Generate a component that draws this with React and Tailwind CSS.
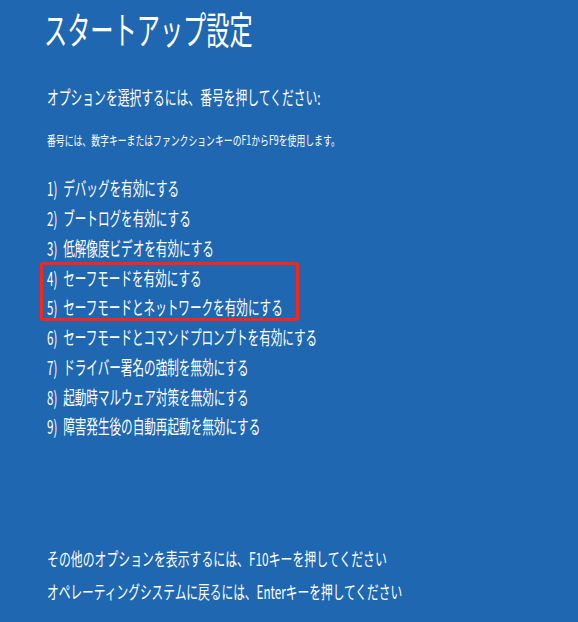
const items = [
  '1)\u2002デバッグを有効にする',
  '2)\u2002ブートログを有効にする',
  '3)\u2002低解像度ビデオを有効にする',
  '4)\u2002セーフモードを有効にする',
  '5)\u2002セーフモードとネットワークを有効にする',
  '6)\u2002セーフモードとコマンドプロンプトを有効にする',
  '7)\u2002ドライバー署名の強制を無効にする',
  '8)\u2002起動時マルウェア対策を無効にする',
  '9)\u2002障害発生後の自動再起動を無効にする',
];

function Item({ text }) {
  return (
    <div className="h-[29.75px] flex items-center">
      <span className="inline-block origin-left scale-x-[0.61] whitespace-nowrap text-[19px] leading-none">
        {text}
      </span>
    </div>
  );
}

export default function App() {
  return (
    <div
      className="w-[578px] h-[622px] overflow-hidden bg-[#1f67b1] text-white"
      style={{ fontFamily: '"Noto Sans CJK JP", "Noto Sans", sans-serif' }}
    >
      <div className="pl-[44px] pt-[8px] h-[47px] flex items-center">
        <h1 className="inline-block origin-left scale-x-[0.61] whitespace-nowrap text-[38px] leading-none font-normal">
          スタートアップ設定
        </h1>
      </div>

      <div className="pl-[47px] mt-[38px] h-[22px] flex items-center">
        <span className="inline-block origin-left scale-x-[0.62] whitespace-nowrap text-[19px] leading-none">
          オプションを選択するには、番号を押してください:
        </span>
      </div>

      <div className="pl-[47px] mt-[25px] h-[14px] flex items-center">
        <span className="inline-block origin-left scale-x-[0.68] whitespace-nowrap text-[13px] leading-none">
          番号には、数字キーまたはファンクションキーのF1からF9を使用します。
        </span>
      </div>

      <div className="relative pl-[47px] mt-[27px]">
        {items.map((t) => (
          <Item key={t} text={t} />
        ))}
        {/* highlight around options 4 and 5 */}
        <div className="absolute left-[40px] top-[89px] w-[259px] h-[59px] border-[3px] border-[#ff2418] rounded-[3px]" />
      </div>

      <div className="pl-[47px] mt-[101px]">
        <div className="h-[33px] flex items-center">
          <span className="inline-block origin-left scale-x-[0.66] whitespace-nowrap text-[18px] leading-none">
            その他のオプションを表示するには、F10キーを押してください
          </span>
        </div>
        <div className="h-[33px] flex items-center">
          <span className="inline-block origin-left scale-x-[0.65] whitespace-nowrap text-[18px] leading-none">
            オペレーティングシステムに戻るには、Enterキーを押してください
          </span>
        </div>
      </div>
    </div>
  );
}
